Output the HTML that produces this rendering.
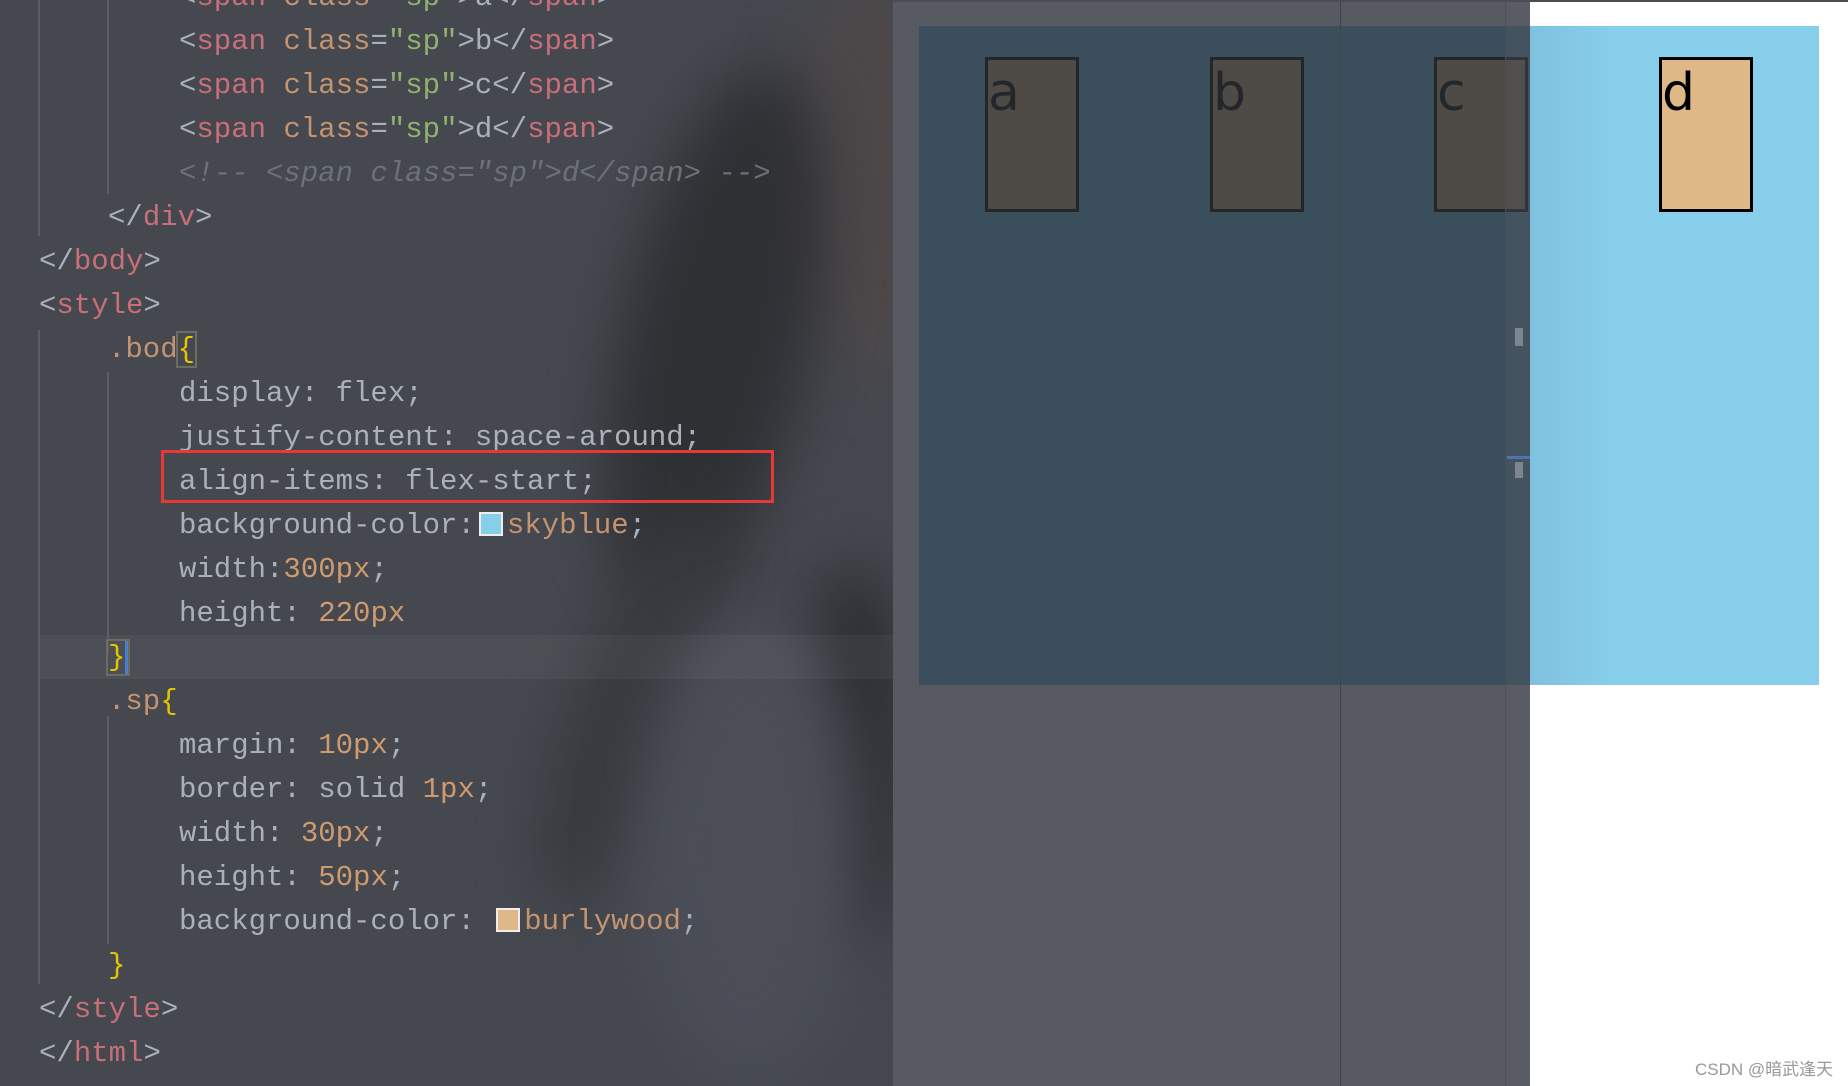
<!DOCTYPE html>
<html><head><meta charset="utf-8"><style>
*{margin:0;padding:0;box-sizing:border-box}
html,body{width:1848px;height:1086px;overflow:hidden;background:#fff;position:relative;font-family:"Liberation Sans","Noto Sans CJK SC",sans-serif}
#ed{position:absolute;left:0;top:0;width:893px;height:1086px;background:#45484f;overflow:hidden}
.blob{position:absolute;border-radius:50%;filter:blur(30px)}
.code{position:absolute;left:0;top:-24px;font-family:"Liberation Mono",monospace;font-size:29px;line-height:44px;color:#aab1bb}
.l{height:44px;position:relative;white-space:pre}
.l0{padding-left:39px}.l1{padding-left:108px}.l2{padding-left:179px}
.t{color:#c86f79}.a{color:#c49470}.s{color:#8fb36e}.n{color:#d09a6f}.c{color:#6c7078;font-style:italic}.b{color:#e5c500}
.g{position:absolute;width:2px;background:#5b5e64}
#cur{position:absolute;left:39px;top:635px;width:1300px;height:44px;background:rgba(255,255,255,0.04)}
#red{position:absolute;left:161px;top:450px;width:613px;height:53px;border:3px solid #e53935}
.sw{display:inline-block;width:24px;height:24px;vertical-align:-3px;border:2px solid #eee;margin:0 4px}
#panel{position:absolute;left:893px;top:0;width:637px;height:1086px;background:#585a62}
#sky{position:absolute;left:919px;top:26px;width:900px;height:659px;background:#87ceeb}
#skyd{position:absolute;left:919px;top:26px;width:611px;height:659px;background:#3b4e5c}
.box{position:absolute;top:57px;width:94px;height:155px;border:3px solid #000;background:#deb887;font-size:52px;line-height:66px;color:#000;font-family:"DejaVu Sans",sans-serif}
.dk{background:#4e4a45;border-color:#23262b;color:#23262b}
#mini{position:absolute;left:1340px;top:0;width:165px;height:1086px;border-left:1px solid #40444b}
#sb{position:absolute;left:1505px;top:0;width:25px;height:1086px;background:rgba(90,98,108,0.25);border-left:1px solid #4a4e55}
#shadow{position:absolute;left:1530px;top:26px;width:80px;height:659px;background:linear-gradient(90deg,rgba(120,180,210,0.5),rgba(135,206,235,0))}
#topline{position:absolute;left:893px;top:0;width:955px;height:2px;background:#4a4c52}
#wm{position:absolute;left:1695px;top:1055px;font-size:17px;color:#999}
</style></head><body>
<div id="ed">
<div class="blob" style="left:790px;top:-40px;width:180px;height:420px;background:#4c4849"></div>
<div class="blob" style="left:620px;top:60px;width:190px;height:560px;background:#2f3034;transform:rotate(12deg)"></div>
<div class="blob" style="left:570px;top:500px;width:120px;height:420px;background:#383a3f;transform:rotate(20deg)"></div>
<div class="blob" style="left:800px;top:560px;width:110px;height:380px;background:#2e2f34"></div>
<div class="blob" style="left:640px;top:620px;width:220px;height:460px;background:#4b4e57"></div>
<div id="cur"></div>
<div class="g" style="left:38px;top:0;height:236px"></div>
<div class="g" style="left:38px;top:330px;height:654px"></div>
<div class="g" style="left:107px;top:0;height:194px"></div>
<div class="g" style="left:107px;top:372px;height:282px"></div>
<div class="g" style="left:107px;top:716px;height:228px"></div>
<div class="code">
<div class="l l2">&lt;<span class="t">span</span> <span class="a">class</span>=<span class="s">"sp"</span>&gt;a&lt;/<span class="t">span</span>&gt;</div>
<div class="l l2">&lt;<span class="t">span</span> <span class="a">class</span>=<span class="s">"sp"</span>&gt;b&lt;/<span class="t">span</span>&gt;</div>
<div class="l l2">&lt;<span class="t">span</span> <span class="a">class</span>=<span class="s">"sp"</span>&gt;c&lt;/<span class="t">span</span>&gt;</div>
<div class="l l2">&lt;<span class="t">span</span> <span class="a">class</span>=<span class="s">"sp"</span>&gt;d&lt;/<span class="t">span</span>&gt;</div>
<div class="l l2"><span class="c">&lt;!-- &lt;span class="sp"&gt;d&lt;/span&gt; --&gt;</span></div>
<div class="l l1">&lt;/<span class="t">div</span>&gt;</div>
<div class="l l0">&lt;/<span class="t">body</span>&gt;</div>
<div class="l l0">&lt;<span class="t">style</span>&gt;</div>
<div class="l l1"><span class="a">.bod</span><span class="b" style="outline:2px solid #6a6d60">{</span></div>
<div class="l l2">display: flex;</div>
<div class="l l2">justify-content: space-around;</div>
<div class="l l2">align-items: flex-start;</div>
<div class="l l2">background-color:<span class="sw" style="background:#87ceeb"></span><span class="a">skyblue</span>;</div>
<div class="l l2">width:<span class="n">300px</span>;</div>
<div class="l l2">height: <span class="n">220px</span></div>
<div class="l l1"><span class="b" style="outline:2px solid #6a6d60;border-right:3px solid #4a7fd0">}</span></div>
<div class="l l1"><span class="a">.sp</span><span class="b">{</span></div>
<div class="l l2">margin: <span class="n">10px</span>;</div>
<div class="l l2">border: solid <span class="n">1px</span>;</div>
<div class="l l2">width: <span class="n">30px</span>;</div>
<div class="l l2">height: <span class="n">50px</span>;</div>
<div class="l l2">background-color: <span class="sw" style="background:#deb887"></span><span class="a">burlywood</span>;</div>
<div class="l l1"><span class="b">}</span></div>
<div class="l l0">&lt;/<span class="t">style</span>&gt;</div>
<div class="l l0">&lt;/<span class="t">html</span>&gt;</div>
</div>
<div id="red"></div>
</div>
<div id="panel"></div>
<div id="sky"></div>
<div id="skyd"></div>
<div class="box dk" style="left:985px">a</div>
<div class="box dk" style="left:1210px">b</div>
<div class="box dk" style="left:1434px">c</div>
<div class="box" style="left:1659px">d</div>
<div id="mini"></div>
<div id="sb"></div>
<div style="position:absolute;left:1515px;top:328px;width:8px;height:18px;background:#7d8590"></div>
<div style="position:absolute;left:1507px;top:456px;width:23px;height:3px;background:#4f73b0"></div>
<div style="position:absolute;left:1515px;top:462px;width:8px;height:16px;background:#7d8590"></div>
<div id="shadow"></div>
<div id="topline"></div>
<div id="wm">CSDN @暗武逢天</div>
</body></html>
